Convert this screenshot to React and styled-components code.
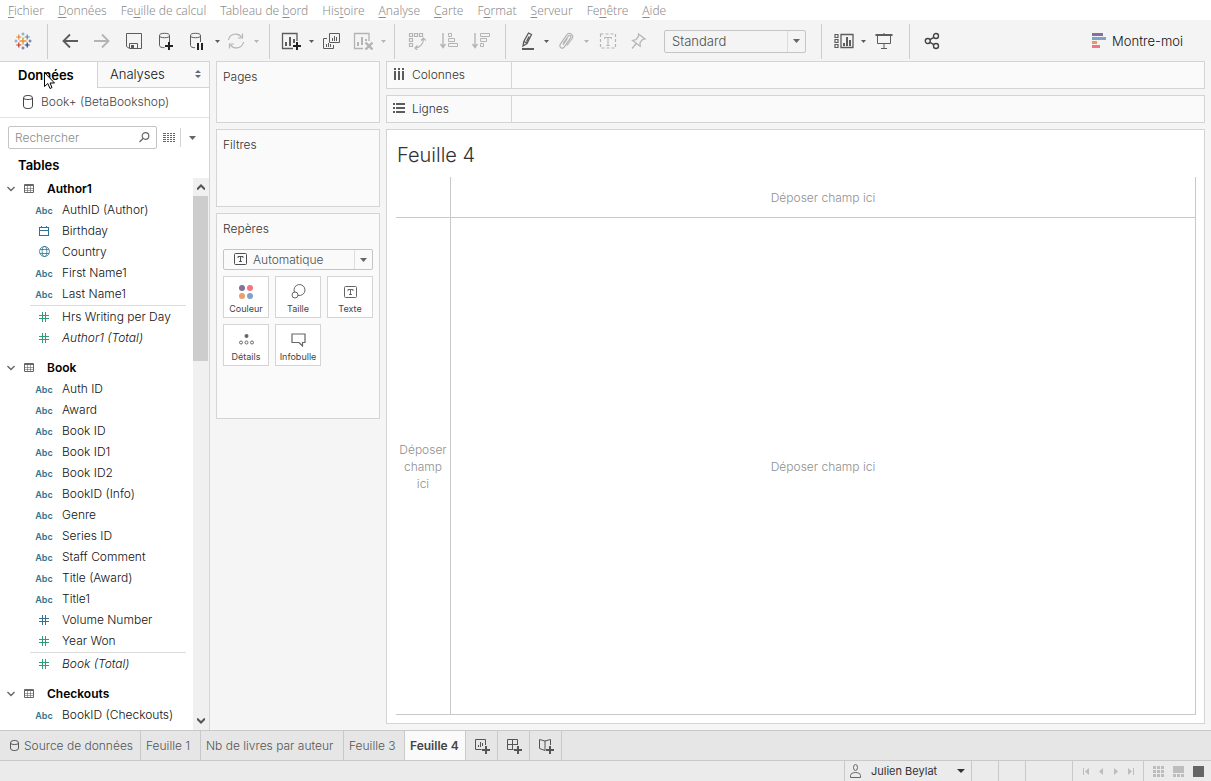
import React from 'react'
import styled, { createGlobalStyle } from "styled-components";

const GlobalStyle = createGlobalStyle`
  * {
    box-sizing: border-box;
  }

  body {
    margin: 0;
    font-family: Inter, "Liberation Sans", sans-serif;
    font-size: 12px;
    font-weight: 300;
    color: #333333;
    background-color: #f5f5f5;
  }

  button, input, select {
    font: inherit;
    color: inherit;
    border: 0;
    padding: 0;
    margin: 0;
    background: none;
    border-radius: 0;
  }

  ul {
    list-style: none;
    margin: 0;
    padding: 0;
  }

  h1, h2, h3 {
    margin: 0;
  }

  svg {
    display: block;
    flex: none;
  }
`

const AppStyled = styled.div`
  display: flex;
  flex-direction: column;
  height: 100vh;
`

/* ---------- menu ---------- */

const MenuBar = styled.nav`
  display: flex;
  align-items: center;
  gap: 14px;
  height: 20px;
  flex: none;
  padding: 2px 8px 0;
  background-color: #ffffff;
`

const MenuItem = styled.button`
  color: #8c8c8c;
  font-family: "Noto Sans", "Liberation Sans", sans-serif;
  font-size: 12px;
  line-height: 18px;
  white-space: nowrap;

  u {
    text-underline-offset: 2px;
  }
`

/* ---------- toolbar ---------- */

const Toolbar = styled.div`
  display: flex;
  align-items: center;
  height: 41px;
  flex: none;
  padding: 1px 28px 0 0;
  background-color: #f4f4f4;
`

const ToolGroup = styled.div`
  display: flex;
  align-items: center;
  height: 35px;
  padding: 0 ${props => props.$right ?? 8}px 0 ${props => props.$left ?? 6}px;
  border-right: ${props => props.$last ? "0" : "1px solid #cccccc"};
`

const ToolButton = styled.button`
  display: flex;
  align-items: center;
  justify-content: center;
  width: ${props => props.$w ?? 32}px;
  height: 28px;
  flex: none;
  color: ${props => props.disabled ? "#b4b4b4" : "#5c5c5c"};
`

const ShowMe = styled.button`
  display: flex;
  align-items: center;
  gap: 6px;
  margin-left: auto;
  font-size: 13px;
  font-weight: 300;
  color: #111111;
`

const SelectBox = styled.div`
  display: flex;
  position: relative;
  width: ${props => props.$w ? props.$w + "px" : "100%"};
  height: ${props => props.$h}px;
  margin-left: ${props => props.$ml ?? 0}px;
  border: 1px solid #c4c4c4;
  border-radius: 2px;
  color: #4e4e4e;

  select {
    appearance: none;
    width: 100%;
    padding-left: ${props => props.$pad}px;
    font-size: ${props => props.$size ?? 12}px;
    outline: none;
  }
`

const SelectArrow = styled.span`
  position: absolute;
  top: 0;
  right: 0;
  bottom: 0;
  width: 18px;
  display: flex;
  align-items: center;
  justify-content: center;
  border-left: 1px solid #dddddd;
  color: #666666;
  pointer-events: none;
`

const SelectIcon = styled.span`
  position: absolute;
  left: 10px;
  top: 3px;
  pointer-events: none;
`

/* ---------- data pane ---------- */

const Main = styled.main`
  display: flex;
  flex: 1;
  min-height: 0;
`

const Sidebar = styled.aside`
  display: flex;
  flex-direction: column;
  width: 210px;
  flex: none;
  background-color: #ffffff;
  border-top: 1px solid #d4d4d4;
  border-right: 1px solid #d4d4d4;
`

const PaneTabs = styled.div`
  display: flex;
  height: 26px;
  flex: none;
`

const PaneTab = styled.button`
  display: flex;
  align-items: center;
  justify-content: space-between;
  flex: ${props => props.$active ? "0 0 97px" : "1"};
  padding: 0 7px 1px ${props => props.$active ? 18 : 12}px;
  font-size: 13px;
  font-weight: ${props => props.$active ? 600 : 300};
  color: ${props => props.$active ? "#000000" : "#111111"};
  background-color: ${props => props.$active ? "#ffffff" : "#f9f9f9"};
  border: solid #d4d4d4;
  border-width: ${props => props.$active ? "0" : "0 0 1px 1px"};
`

const DataSource = styled.button`
  display: flex;
  align-items: center;
  gap: 8px;
  height: 30px;
  flex: none;
  padding: 0 0 2px 23px;
  color: #444444;
  border-bottom: 1px solid #e2e2e2;
`

const SearchRow = styled.div`
  display: flex;
  align-items: center;
  height: 23px;
  flex: none;
  margin: 8px 8px 0;
`

const SearchBox = styled.label`
  display: flex;
  align-items: center;
  width: 149px;
  height: 23px;
  padding: 0 6px;
  border: 1px solid #c4c4c4;
  border-radius: 2px;
  color: #666666;

  input {
    flex: 1;
    min-width: 0;
    outline: none;
  }

  input::placeholder {
    color: #8a8a8a;
  }
`

const SearchTools = styled.div`
  display: flex;
  align-items: center;
  height: 19px;
  color: #666666;
`

const SearchTool = styled.button`
  display: flex;
  align-items: center;
  justify-content: center;
  width: 23px;
  height: 19px;
  border-left: ${props => props.$line ? "1px solid #d4d4d4" : "0"};
`

const TablesTitle = styled.h2`
  padding: 8px 0 4px 18px;
  font-size: 13px;
  line-height: 17px;
  font-weight: 600;
  color: #000000;
`

const TreeArea = styled.div`
  display: flex;
  flex: 1;
  min-height: 0;
`

const Tree = styled.div`
  flex: 1;
  min-width: 0;
  overflow: hidden;
`

const TableGroup = styled.section`
  margin-bottom: 9px;
`

const TableName = styled.button`
  display: flex;
  align-items: center;
  width: 100%;
  height: 21px;
  padding-left: 7px;
  font-weight: 600;
  color: #000000;
  text-align: left;

  svg:nth-child(2) {
    margin: 0 13px 0 9px;
  }
`

const FieldList = styled.ul`
  & + & {
    margin: 1px 7px 0 30px;
    border-top: 1px solid #dcdcdc;
  }

  & + & button {
    padding-left: 6px;
  }
`

const Field = styled.button`
  display: flex;
  align-items: center;
  height: 21px;
  padding-left: 36px;
  color: #111111;
  font-style: ${props => props.$total ? "italic" : "normal"};
  white-space: nowrap;
`

const FieldType = styled.span`
  display: flex;
  justify-content: center;
  width: 16px;
  margin-right: 10px;
  padding-top: ${props => props.$text ? 1 : 0}px;
  font-size: 9px;
  font-weight: 600;
  font-style: normal;
  color: ${props => props.$measure ? "#2f9b79" : "#2f7391"};
`

const Scrollbar = styled.div`
  display: flex;
  flex-direction: column;
  width: 16px;
  background-color: #f0f0f0;
  color: #555555;
`

const ScrollArrow = styled.button`
  display: flex;
  align-items: center;
  justify-content: center;
  width: 15px;
  height: 18px;
`

const ScrollTrack = styled.div`
  flex: 1;
`

const ScrollThumb = styled.div`
  width: 15px;
  height: 32%;
  background-color: #cdcdcd;
`

/* ---------- cards ---------- */

const Cards = styled.div`
  display: flex;
  flex-direction: column;
  gap: 6px;
  width: 164px;
  flex: none;
  margin-left: 6px;
`

const Card = styled.section`
  min-height: ${props => props.$h}px;
  padding: 7px 6px;
  background-color: #fafafa;
  border: 1px solid #d4d4d4;

  h3 {
    font-size: 12px;
    line-height: 16px;
    font-weight: 300;
    color: #333333;
  }
`

const MarkSelect = styled.div`
  margin: 12px 0 6px;
`

const MarkGrid = styled.div`
  display: grid;
  grid-template-columns: repeat(3, 46px);
  gap: 6px;
`

const MarkButton = styled.button`
  display: flex;
  flex-direction: column;
  align-items: center;
  height: 42px;
  padding-top: 7px;
  font-size: 9px;
  line-height: 12px;
  font-weight: 400;
  color: #444444;
  background-color: #ffffff;
  border: 1px solid #d4d4d4;
`

const MarkPicture = styled.span`
  display: flex;
  align-items: center;
  height: 15px;
  margin-bottom: 4px;
  color: #666666;
`

/* ---------- worksheet ---------- */

const Workspace = styled.div`
  display: flex;
  flex-direction: column;
  gap: 6px;
  flex: 1;
  min-width: 0;
  padding: 0 6px 6px;
`

const Shelf = styled.div`
  display: flex;
  height: 28px;
  flex: none;
  background-color: #fafafa;
  border: 1px solid #d4d4d4;
`

const ShelfLabel = styled.div`
  display: flex;
  align-items: center;
  gap: 7px;
  width: 125px;
  padding: 0 0 2px 6px;
  color: #333333;
  border-right: 1px solid #d4d4d4;

  svg {
    color: #5c5c5c;
  }
`

const View = styled.section`
  display: flex;
  flex-direction: column;
  flex: 1;
  min-height: 0;
  padding: 13px 8px 8px 9px;
  background-color: #ffffff;
  border: 1px solid #d4d4d4;

  h1 {
    padding-left: 1px;
    margin-bottom: 10px;
    font-size: 20px;
    line-height: 24px;
    font-weight: 300;
    color: #333333;
  }
`

const DropGrid = styled.div`
  display: grid;
  grid-template-columns: 55px 1fr;
  grid-template-rows: 41px 1fr;
  flex: 1;
  line-height: 17px;
  color: #8f8f8f;
`

const DropZone = styled.div`
  display: flex;
  align-items: center;
  justify-content: center;
  padding: 0 ${props => props.$narrow ? 3 : 0}px;
  text-align: center;
  border: solid #c8c8c8;
  border-width: 0 1px 1px 0;
`

/* ---------- bottom ---------- */

const SheetTabs = styled.div`
  display: flex;
  height: 31px;
  flex: none;
  background-color: #e6e6e6;
  border: solid #c9c9c9;
  border-width: 1px 0;
`

const SheetTab = styled.button`
  display: flex;
  align-items: center;
  justify-content: ${props => props.$icon ? "center" : "flex-start"};
  gap: 5px;
  width: ${props => props.$w}px;
  padding-left: ${props => props.$icon ? 0 : 5}px;
  white-space: nowrap;
  color: ${props => props.$active ? "#444444" : "#555555"};
  font-weight: ${props => props.$active ? 600 : 300};
  background-color: ${props => props.$active ? "#fafafa" : "transparent"};
  border-right: 1px solid #c9c9c9;

  svg {
    margin-left: ${props => props.$icon ? 0 : 5}px;
  }
`

const StatusBar = styled.footer`
  display: flex;
  justify-content: flex-end;
  height: 20px;
  flex: none;
  background-color: #ebebeb;
`

const StatusCell = styled.div`
  display: flex;
  align-items: center;
  justify-content: space-around;
  width: ${props => props.$w}px;
  padding: 0 ${props => props.$views ? 2 : 4}px 0 ${props => props.$views ? 4 : 5}px;
  color: ${props => props.$dark ? "#333333" : "#bdbdbd"};
  border-left: 1px solid #c9c9c9;

  button {
    display: flex;
    align-items: center;
  }
`

const UserButton = styled.button`
  flex: 1;
  padding-right: 2px;
  font-weight: 400;
  font-size: 11px;

  span {
    flex: 1;
    padding-left: 10px;
    text-align: left;
  }
`

const Pointer = styled.svg`
  position: absolute;
  left: 44px;
  top: 72px;
  pointer-events: none;
`

/* ---------- icons ---------- */

const Icon = ({ w = 18, h = 18, children, ...rest }) => (
    <svg width={w} height={h} viewBox={`0 0 ${w} ${h}`} fill="none" stroke="currentColor" aria-hidden="true" {...rest}>
        {children}
    </svg>
)

const Caret = ({ w = 5, h = 3 }) => (
    <Icon w={w} h={h} stroke="none"><path fill="currentColor" d={`M0 0H${w}L${w / 2} ${h}Z`}/></Icon>
)

const LogoIcon = () => (
    <Icon w={18} h={18}>
        <path stroke="#e8912d" strokeWidth="1.4" d="M9 5.5v7M5.5 9h7"/>
        <path stroke="#e0853a" strokeWidth="1.2" d="M4.8 2.5v5M2.3 5h5"/>
        <path stroke="#5b8ba0" strokeWidth="1.2" d="M13.2 2.5v5M10.7 5h5"/>
        <path stroke="#c0392b" strokeWidth="1.2" d="M4.8 10.5v5M2.3 13h5"/>
        <path stroke="#1f447e" strokeWidth="1.2" d="M13.2 10.5v5M10.7 13h5"/>
        <path stroke="#6fa3b5" d="M9 .5v3M7.5 2h3M2 7.5v3M.5 9h3"/>
        <path stroke="#5b6591" d="M16 7.5v3M14.5 9h3M9 14.5v3M7.5 16h3"/>
    </Icon>
)

const BackIcon = () => <Icon strokeWidth="1.800"><path d="M2 9h15M9 2.500L2.500 9 9 15.500"/></Icon>
const ForwardIcon = () => <Icon strokeWidth="1.800"><path d="M1 9h15M9 2.500L15.500 9 9 15.500"/></Icon>

const SaveIcon = () => (
    <Icon>
        <path d="M1.500 1.500h15v15h-12l-3-2z"/>
        <path d="M4.500 16v-4.500h8V16"/>
        <path fill="currentColor" stroke="none" d="M6 13h3v3H6z"/>
    </Icon>
)

const AddDataIcon = () => (
    <Icon>
        <ellipse cx="7.500" cy="3.500" rx="5" ry="2.200"/>
        <path d="M2.500 3.500v10c0 1.400 2 2.200 5 2.200M12.500 3.500V10"/>
        <path stroke="#222222" strokeWidth="2" d="M12 10v8M8 14h8"/>
    </Icon>
)

const PauseDataIcon = () => (
    <Icon>
        <ellipse cx="6.500" cy="3.500" rx="5" ry="2.200"/>
        <path d="M1.500 3.500v10c0 1.400 2 2.200 4.500 2.200M11.500 3.500V10"/>
        <path stroke="#222222" strokeWidth="2" d="M9 11v7M13 11v7"/>
    </Icon>
)

const RefreshIcon = () => (
    <Icon strokeWidth="1.200">
        <path d="M1.500 8A7.200 7.200 0 0 1 14.500 5.200M16.500 10A7.200 7.200 0 0 1 3.500 12.800"/>
        <path d="M15.500 1.500v4.500h-4.500M2.500 16.500v-4.500h4.500"/>
    </Icon>
)

const AddSheetIcon = () => (
    <Icon w={20} h={18}>
        <path strokeWidth="1.300" d="M16 9V1.500H1.500v15H12"/>
        <path strokeWidth="2" d="M5 14v-4M9 14V5M13 11V7"/>
        <path stroke="#222222" strokeWidth="2" d="M16 10v8M12 14h8"/>
    </Icon>
)

const DuplicateIcon = () => (
    <Icon>
        <path d="M7.500 1.500h10v9h-10zM5 6.500H1.500v10h10V13"/>
        <path d="M10.500 9V6M12.500 9V4M14.500 9V5M4.500 15v-3M6.500 15v-4M8.500 15v-3"/>
    </Icon>
)

const ClearIcon = () => (
    <Icon w={20}>
        <path strokeWidth="1.300" d="M16 9V1.500H1.500v15H10"/>
        <path strokeWidth="2" d="M5 14v-4M9 13V5M13 9V7"/>
        <path strokeWidth="2.400" d="M12.500 10.500l7 7M19.500 10.500l-7 7"/>
    </Icon>
)

const SwapIcon = () => (
    <Icon strokeWidth="1.200">
        <path d="M1.500 1.500h3v3h-3zM6.500 1.500h3v3h-3zM11.500 1.500h3v3h-3zM1.500 6.500h3v3h-3zM1.500 11.500h3v3h-3z"/>
        <path d="M15.500 6.500c0 5-3 9-8 9.500M13 8.500l2.500-2.500L18 8.500M9.500 13.500L7 16l2.500 2.500"/>
    </Icon>
)

const SortAscIcon = () => (
    <Icon>
        <path strokeWidth="1.400" d="M3 1v14M.5 12L3 15.500 5.500 12"/>
        <path d="M8.500 1.500h3v3h-3zM8.500 6.500h6v3h-6zM8.500 11.500h9v3h-9z"/>
    </Icon>
)

const SortDescIcon = () => (
    <Icon>
        <path strokeWidth="1.400" d="M3 1v14M.5 12L3 15.500 5.500 12"/>
        <path d="M8.500 1.500h9v3h-9zM8.500 6.500h6v3h-6zM8.500 11.500h3v3h-3z"/>
    </Icon>
)

const HighlightIcon = () => (
    <Icon>
        <path strokeWidth="1.300" d="M9.500 1l3 1.500-4.500 9-4 2.500.8-4.500zM5 9.500l3 1.600M10 4.500l-2.500 5"/>
        <path strokeWidth="2" d="M3 17h12"/>
    </Icon>
)

const ClipIcon = () => (
    <Icon>
        <path strokeWidth="1.200" d="M6 11.500l5-7c1.500-2 3.800-.4 2.400 1.700l-6 8.600c-2.200 3-6 .2-4-2.600l6.200-9c2.800-3.800 8-.2 5.200 3.800L10 13.500M10.500 6.500L6 13"/>
    </Icon>
)

const LabelIcon = () => (
    <Icon>
        <path strokeWidth="1.200" strokeDasharray="3 2" d="M1.500 2h15v14h-15z"/>
        <path d="M5.500 7V5.500h7V7M9 5.500v8M7.500 13.500h3"/>
    </Icon>
)

const PinIcon = () => (
    <Icon strokeWidth="1.200">
        <path d="M9.500 2l6.500 5-2.300.4-2.700 3.100.2 3.700-7.700-5.700 3.600-.9L9.500 4.200zM7.300 11.500L3 16.500"/>
    </Icon>
)

const CardsIcon = () => (
    <Icon w={20}>
        <path strokeWidth="1.200" d="M1 2.500h3v3H1zM1 7.500h3v3H1zM1 12.500h3v3H1z"/>
        <path strokeWidth="1.300" d="M7 2.500h12v13H7z"/>
        <path strokeWidth="2" d="M10 14v-3M13 14V5M16 14V8"/>
    </Icon>
)

const PresentIcon = () => (
    <Icon>
        <path strokeWidth="2" d="M.5 3h17"/>
        <path d="M2.500 4v7.500h13V4M9 12v4.500M6 16.500h6M9 1v2"/>
    </Icon>
)

const ShareIcon = () => (
    <Icon w={16} h={18} strokeWidth="1.400" stroke="#444444">
        <circle cx="12" cy="4" r="2.500"/><circle cx="3.800" cy="9" r="2.500"/><circle cx="12" cy="14" r="2.500"/>
        <path d="M6 7.700l3.800-2.400M6 10.300l3.800 2.400"/>
    </Icon>
)

const ShowMeIcon = () => (
    <Icon w={14} h={16} stroke="none">
        <path fill="#85709a" d="M0 0h11v3H0z"/>
        <path fill="#7ea2cc" d="M0 4h14v3H0z"/>
        <path fill="#e59a66" d="M0 8h5v3H0z"/>
        <path fill="#f57480" d="M0 12h8v3H0z"/>
    </Icon>
)

const CylinderIcon = ({ w = 10, h = 14 }) => (
    <Icon w={w} h={h}>
        <rect x=".5" y=".5" width={w - 1} height={h - 1} rx={(w - 1) / 2.500} ry="2.500"/>
        <path d={`M.5 3c0 2 ${w - 1} 2 ${w - 1} 0`}/>
    </Icon>
)

const SpinIcon = () => (
    <Icon w={7} h={8} stroke="none"><path fill="#5c6b7d" d="M3 0l3 3H0zM3 8l3-3H0z"/></Icon>
)

const SearchIcon = () => (
    <Icon w={11} h={11} strokeWidth="1.200"><circle cx="6.500" cy="4" r="3.300"/><path d="M4 6.500L.5 10"/></Icon>
)

const ListIcon = () => (
    <Icon w={12} h={10} shapeRendering="crispEdges">
        {[0, 2, 4, 6, 8].map(y => <path key={y} d={`M0 ${y + 0.5}h3m1 0h2m1 0h2m1 0h2`}/>)}
    </Icon>
)

const ChevronIcon = () => <Icon w={8} h={6} stroke="#666666" strokeWidth="1.400"><path d="M.5 1L4 4.500 7.500 1"/></Icon>

const TableIcon = () => (
    <Icon w={10} h={9} stroke="#666666">
        <path d="M.5.5h9v8h-9zM0 1.500h10"/>
        <path opacity=".6" d="M0 4.500h10M0 6.500h10M3.500 2v6M6.500 2v6"/>
    </Icon>
)

const CalendarIcon = () => (
    <Icon w={10} h={10} shapeRendering="crispEdges"><path d="M.5 1.500h9v8h-9zM0 4.500h10M2.500 0v2M7.500 0v2"/></Icon>
)

const GlobeIcon = () => (
    <Icon w={11} h={11} strokeWidth=".8">
        <circle cx="5.500" cy="5.500" r="5"/><ellipse cx="5.500" cy="5.500" rx="2.300" ry="5"/>
        <path d="M1 3.500h9M1 7.500h9"/>
    </Icon>
)

const HashIcon = () => (
    <Icon w={10} h={10}><path d="M3.500 0v10M6.500 0v10M0 3.500h10M0 6.500h10"/></Icon>
)

const TextMarkIcon = () => (
    <Icon w={13} h={12}>
        <rect x=".5" y=".5" width="12" height="11" rx="1"/>
        <path d="M4 5V3.500h5V5M6.500 3.500v5M5 8.500h3"/>
    </Icon>
)

const ColorIcon = () => (
    <Icon w={14} h={14} stroke="none">
        <circle cx="3" cy="3" r="3" fill="#85709a"/><circle cx="11" cy="3" r="3" fill="#f57480"/>
        <circle cx="3" cy="11" r="3" fill="#e8a06c"/><circle cx="11" cy="11" r="3" fill="#7ea2cc"/>
    </Icon>
)

const SizeIcon = () => (
    <Icon w={15} h={15}><path d="M3.500 8.300A5.500 5.500 0 1 1 7 11.300"/><circle cx="4" cy="11" r="3"/></Icon>
)

const DetailIcon = () => (
    <Icon w={15} h={11}>
        <circle cx="7.500" cy="2" r="2" fill="currentColor" stroke="none"/>
        <circle cx="2" cy="8.500" r="1.500"/><circle cx="7.500" cy="8.500" r="1.500"/><circle cx="13" cy="8.500" r="1.500"/>
    </Icon>
)

const TooltipIcon = () => (
    <Icon w={15} h={14} strokeWidth="1.200"><path d="M1 1h13v8.500h-2.500V13L8 9.500H1z"/></Icon>
)

const ColumnsIcon = () => (
    <Icon w={12} h={12} strokeWidth="2" shapeRendering="crispEdges">
        <path d="M2 0v2m0 1v9M6 0v2m0 1v9M10 0v2m0 1v9"/>
    </Icon>
)

const RowsIcon = () => (
    <Icon w={12} h={10} strokeWidth="2" shapeRendering="crispEdges">
        <path d="M0 1h2m1 0h9M0 5h2m1 0h9M0 9h2m1 0h9"/>
    </Icon>
)

const NewSheetIcon = () => (
    <Icon w={16} h={16}>
        <path d="M11.500 7V1.500H1.500v10h6M4.500 9V7M6.500 9V4M8.500 8V5"/>
        <path strokeWidth="2" d="M12 8v8M8 12h8"/>
    </Icon>
)

const NewDashboardIcon = () => (
    <Icon w={16} h={16}>
        <path d="M11.500 7V1.500H1.500v10h6M6.500 1.500v10M1.500 6.500h10"/>
        <path strokeWidth="2" d="M12 8v8M8 12h8"/>
    </Icon>
)

const NewStoryIcon = () => (
    <Icon w={16} h={16}>
        <path d="M12.500 7V1.500L7 3 1.500 1.500v9L7 12.500V3"/>
        <path strokeWidth="2" d="M12 8v8M8 12h8"/>
    </Icon>
)

const UserIcon = () => (
    <Icon w={11} h={14} stroke="#666666">
        <ellipse cx="5.500" cy="3.500" rx="2" ry="3"/><path d="M.5 13.500v-2c0-4 10-4 10 0v2z"/>
    </Icon>
)

/* ---------- data ---------- */

const menus = [
    ["", "F", "ichier"], ["", "D", "onnées"], ["Fe", "u", "ille de calcul"], ["Tableau de ", "b", "ord"],
    ["His", "t", "oire"], ["", "A", "nalyse"], ["", "C", "arte"], ["F", "o", "rmat"],
    ["", "S", "erveur"], ["Fe", "n", "être"], ["", "A", "ide"],
]

const tables = [
    {
        name: "Author1",
        dimensions: [["abc", "AuthID (Author)"], ["date", "Birthday"], ["geo", "Country"], ["abc", "First Name1"], ["abc", "Last Name1"]],
        measures: [["measure", "Hrs Writing per Day"], ["total", "Author1 (Total)"]],
    },
    {
        name: "Book",
        dimensions: [
            ["abc", "Auth ID"], ["abc", "Award"], ["abc", "Book ID"], ["abc", "Book ID1"], ["abc", "Book ID2"],
            ["abc", "BookID (Info)"], ["abc", "Genre"], ["abc", "Series ID"], ["abc", "Staff Comment"],
            ["abc", "Title (Award)"], ["abc", "Title1"], ["number", "Volume Number"], ["measure", "Year Won"],
        ],
        measures: [["total", "Book (Total)"]],
    },
    { name: "Checkouts", dimensions: [["abc", "BookID (Checkouts)"]], measures: [] },
]

const typeIcons = {
    abc: "Abc",
    date: <CalendarIcon/>,
    geo: <GlobeIcon/>,
    number: <HashIcon/>,
    measure: <HashIcon/>,
    total: <HashIcon/>,
}

const marks = [
    ["Couleur", ColorIcon], ["Taille", SizeIcon], ["Texte", TextMarkIcon], ["Détails", DetailIcon], ["Infobulle", TooltipIcon],
]

/* ---------- parts ---------- */

const Fields = ({ items }) => (
    <FieldList>
        {items.map(([type, name]) => (
            <li key={name}>
                <Field type={"button"} $total={type === "total"}>
                    <FieldType $text={type === "abc"} $measure={type === "measure" || type === "total"}>
                        {typeIcons[type]}
                    </FieldType>
                    {name}
                </Field>
            </li>
        ))}
    </FieldList>
)

const MainToolbar = () => (
    <Toolbar>
        <ToolGroup $left={7} $right={8}>
            <ToolButton aria-label="Accueil"><LogoIcon/></ToolButton>
        </ToolGroup>
        <ToolGroup $right={9}>
            <ToolButton aria-label="Annuler"><BackIcon/></ToolButton>
            <ToolButton aria-label="Rétablir" disabled><ForwardIcon/></ToolButton>
            <ToolButton aria-label="Enregistrer"><SaveIcon/></ToolButton>
            <ToolButton aria-label="Nouvelle source"><AddDataIcon/></ToolButton>
            <ToolButton aria-label="Suspendre"><PauseDataIcon/></ToolButton>
            <ToolButton aria-label="Options" $w={6}><Caret/></ToolButton>
            <ToolButton aria-label="Actualiser" disabled><RefreshIcon/></ToolButton>
            <ToolButton aria-label="Options" disabled $w={8}><Caret/></ToolButton>
        </ToolGroup>
        <ToolGroup $left={5} $right={7}>
            <ToolButton aria-label="Nouvelle feuille"><AddSheetIcon/></ToolButton>
            <ToolButton aria-label="Options" $w={8}><Caret/></ToolButton>
            <ToolButton aria-label="Dupliquer"><DuplicateIcon/></ToolButton>
            <ToolButton aria-label="Effacer" disabled><ClearIcon/></ToolButton>
            <ToolButton aria-label="Options" disabled $w={8}><Caret/></ToolButton>
        </ToolGroup>
        <ToolGroup>
            <ToolButton aria-label="Permuter" disabled><SwapIcon/></ToolButton>
            <ToolButton aria-label="Tri croissant" disabled><SortAscIcon/></ToolButton>
            <ToolButton aria-label="Tri décroissant" disabled><SortDescIcon/></ToolButton>
        </ToolGroup>
        <ToolGroup $left={8} $right={15}>
            <ToolButton aria-label="Surligner" $w={28}><HighlightIcon/></ToolButton>
            <ToolButton aria-label="Options" $w={8}><Caret/></ToolButton>
            <ToolButton aria-label="Grouper" disabled><ClipIcon/></ToolButton>
            <ToolButton aria-label="Options" disabled $w={8}><Caret/></ToolButton>
            <ToolButton aria-label="Étiquettes" disabled $w={36}><LabelIcon/></ToolButton>
            <ToolButton aria-label="Figer" disabled $w={24}><PinIcon/></ToolButton>
            <SelectBox $w={142} $h={23} $ml={14} $pad={7} $size={13}>
                <select aria-label="Ajuster"><option>Standard</option></select>
                <SelectArrow><Caret w={7} h={4}/></SelectArrow>
            </SelectBox>
        </ToolGroup>
        <ToolGroup $right={7}>
            <ToolButton aria-label="Fiches"><CardsIcon/></ToolButton>
            <ToolButton aria-label="Options" $w={6}><Caret/></ToolButton>
            <ToolButton aria-label="Présentation" $w={36}><PresentIcon/></ToolButton>
        </ToolGroup>
        <ToolGroup $last>
            <ToolButton aria-label="Partager"><ShareIcon/></ToolButton>
        </ToolGroup>
        <ShowMe><ShowMeIcon/>Montre-moi</ShowMe>
    </Toolbar>
)

const DataPane = () => (
    <Sidebar>
        <PaneTabs>
            <PaneTab $active>Données</PaneTab>
            <PaneTab>Analyses<SpinIcon/></PaneTab>
        </PaneTabs>
        <DataSource><CylinderIcon/>Book+ (BetaBookshop)</DataSource>
        <SearchRow>
            <SearchBox>
                <input type={"text"} placeholder="Rechercher" aria-label="Rechercher"/>
                <SearchIcon/>
            </SearchBox>
            <SearchTools>
                <SearchTool aria-label="Affichage"><ListIcon/></SearchTool>
                <SearchTool aria-label="Menu" $line><Caret w={7} h={4}/></SearchTool>
            </SearchTools>
        </SearchRow>
        <TablesTitle>Tables</TablesTitle>
        <TreeArea>
            <Tree>
                {tables.map(table => (
                    <TableGroup key={table.name}>
                        <TableName><ChevronIcon/><TableIcon/>{table.name}</TableName>
                        <Fields items={table.dimensions}/>
                        {table.measures.length > 0 && <Fields items={table.measures}/>}
                    </TableGroup>
                ))}
            </Tree>
            <Scrollbar>
                <ScrollArrow aria-label="Haut"><Icon w={8} h={6} strokeWidth="2"><path d="M0 5.500L4 1.500 8 5.500"/></Icon></ScrollArrow>
                <ScrollTrack><ScrollThumb/></ScrollTrack>
                <ScrollArrow aria-label="Bas"><Icon w={8} h={6} strokeWidth="2"><path d="M0 .5L4 4.500 8 .5"/></Icon></ScrollArrow>
            </Scrollbar>
        </TreeArea>
    </Sidebar>
)

const MarksCard = () => (
    <Card $h={206}>
        <h3>Repères</h3>
        <MarkSelect>
            <SelectBox $h={21} $pad={29}>
                <SelectIcon><TextMarkIcon/></SelectIcon>
                <select aria-label="Type de repère"><option>Automatique</option></select>
                <SelectArrow><Caret w={7} h={4}/></SelectArrow>
            </SelectBox>
        </MarkSelect>
        <MarkGrid>
            {marks.map(([label, MarkIcon]) => (
                <MarkButton key={label}>
                    <MarkPicture><MarkIcon/></MarkPicture>
                    {label}
                </MarkButton>
            ))}
        </MarkGrid>
    </Card>
)

const App = () => {
    return (
        <AppStyled>
            <GlobalStyle/>
            <MenuBar>
                {menus.map(([before, key, after]) => (
                    <MenuItem key={before + key + after}>{before}<u>{key}</u>{after}</MenuItem>
                ))}
            </MenuBar>
            <MainToolbar/>
            <Main>
                <DataPane/>
                <Cards>
                    <Card $h={62}><h3>Pages</h3></Card>
                    <Card $h={78}><h3>Filtres</h3></Card>
                    <MarksCard/>
                </Cards>
                <Workspace>
                    <Shelf><ShelfLabel><ColumnsIcon/>Colonnes</ShelfLabel></Shelf>
                    <Shelf><ShelfLabel><RowsIcon/>Lignes</ShelfLabel></Shelf>
                    <View>
                        <h1>Feuille 4</h1>
                        <DropGrid>
                            <DropZone/>
                            <DropZone>Déposer champ ici</DropZone>
                            <DropZone $narrow>Déposer champ ici</DropZone>
                            <DropZone>Déposer champ ici</DropZone>
                        </DropGrid>
                    </View>
                </Workspace>
            </Main>
            <SheetTabs>
                <SheetTab $w={141}><CylinderIcon w={9} h={11}/>Source de données</SheetTab>
                <SheetTab $w={60}>Feuille 1</SheetTab>
                <SheetTab $w={143}>Nb de livres par auteur</SheetTab>
                <SheetTab $w={61}>Feuille 3</SheetTab>
                <SheetTab $w={61} $active>Feuille 4</SheetTab>
                <SheetTab $w={32} $icon aria-label="Nouvelle feuille"><NewSheetIcon/></SheetTab>
                <SheetTab $w={32} $icon aria-label="Nouveau tableau de bord"><NewDashboardIcon/></SheetTab>
                <SheetTab $w={32} $icon aria-label="Nouvelle histoire"><NewStoryIcon/></SheetTab>
            </SheetTabs>
            <StatusBar>
                <StatusCell $w={127} $dark>
                    <UserButton><UserIcon/><span>Julien Beylat</span><Caret w={8} h={4}/></UserButton>
                </StatusCell>
                <StatusCell $w={27}/>
                <StatusCell $w={27}/>
                <StatusCell $w={47}/>
                <StatusCell $w={71}>
                    <button aria-label="Première"><Icon w={7} h={7} stroke="none"><path fill="currentColor" d="M0 0h1v7H0zM6 0v7L2 3.500z"/></Icon></button>
                    <button aria-label="Précédente"><Icon w={5} h={7} stroke="none"><path fill="currentColor" d="M4 0v7L0 3.500z"/></Icon></button>
                    <button aria-label="Suivante"><Icon w={5} h={7} stroke="none"><path fill="currentColor" d="M1 0v7l4-3.500z"/></Icon></button>
                    <button aria-label="Dernière"><Icon w={7} h={7} stroke="none"><path fill="currentColor" d="M6 0h1v7H6zM1 0v7l4-3.500z"/></Icon></button>
                </StatusCell>
                <StatusCell $w={68} $views>
                    <button aria-label="Vignettes"><Icon w={11} h={11} strokeWidth="3" strokeDasharray="3 1"><path d="M0 1.500h11M0 5.500h11M0 9.500h11"/></Icon></button>
                    <button aria-label="Pellicule"><Icon w={11} h={11} stroke="none"><path fill="currentColor" d="M0 0h11v7H0zM0 8h3v3H0zM4 8h3v3H4zM8 8h3v3H8z"/></Icon></button>
                    <button aria-label="Onglets"><Icon w={11} h={11} stroke="none"><path fill="#666666" d="M0 0h11v11H0z"/></Icon></button>
                </StatusCell>
            </StatusBar>
            <Pointer width="12" height="18" viewBox="0 0 12 18" aria-hidden="true">
                <path d="M.5.5v14l3.300-3 2.200 5 2-1-2-4.500h4.500z" fill="#ffffff" stroke="#000000"/>
            </Pointer>
        </AppStyled>
    );
};

export default App;
